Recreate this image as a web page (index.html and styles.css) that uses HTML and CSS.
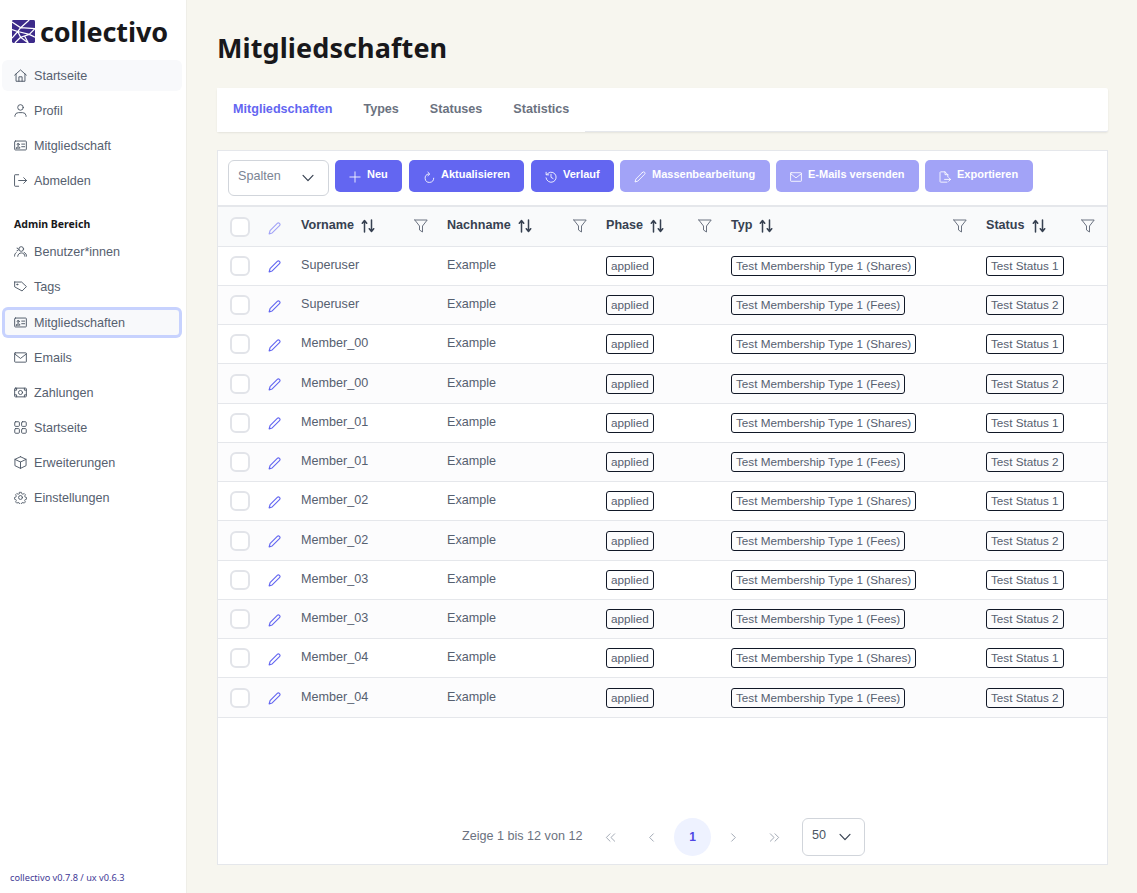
FILE: index.html
```html
<!DOCTYPE html>
<html lang="de">
<head>
    <meta charset="UTF-8">
    <meta name="viewport" content="width=device-width, initial-scale=1.0">
    <title>Mitgliedschaften</title>
    <link rel="stylesheet" href="styles.css">
</head>
<body>

<!-- Icon set -->
<svg class="icon-defs" aria-hidden="true">
    <symbol id="i-home" viewBox="0 0 14 14"><path d="M.7 6.6 7 1l6.300 5.600M2.200 5.500v7.700h9.600V5.500M5.300 13.200V8.400h3.400v4.800"/></symbol>
    <symbol id="i-user" viewBox="0 0 14 14"><circle cx="7" cy="3.700" r="3"/><path d="M1 13.300V12.500a3.800 3.800 0 0 1 3.800-3.200h4.400A3.800 3.800 0 0 1 13 12.500v.8"/></symbol>
    <symbol id="i-card" viewBox="0 0 14 14"><rect x=".7" y="2.200" width="12.600" height="9.600" rx=".8"/><circle cx="4.500" cy="5.800" r="1.100"/><path d="M2.500 9.800c.2-2 3.800-2 4 0H2.500ZM8.300 5.500h3.200M8.300 8.300h3.200"/></symbol>
    <symbol id="i-out" viewBox="0 0 14 14"><path d="M5 .8H1.200a.6.6 0 0 0-.6.6v11.200c0 .3.300.6.600.6H5M5 7h8.500M10.500 4l3 3-3 3"/></symbol>
    <symbol id="i-users" viewBox="0 0 14 14"><circle cx="7.800" cy="4.300" r="2.500"/><path d="M4 12.200c0-5 7.800-5 7.800 0M13.500 12c0-1.800-.8-3.300-2.600-4M3.300 6.300a1.500 1.500 0 1 0 0-3M.6 12c0-1.800.4-3 1.800-3.800"/></symbol>
    <symbol id="i-tag" viewBox="0 0 14 14"><path d="M.7 2.200h7.500l5.200 4.900-4.700 4.700-8-4.400V2.200Z"/><circle cx="3.500" cy="4.800" r=".6"/></symbol>
    <symbol id="i-mail" viewBox="0 0 14 14"><rect x=".7" y="2" width="12.600" height="10" rx=".6"/><path d="M.8 3.200 7 8l6.200-4.800"/></symbol>
    <symbol id="i-money" viewBox="0 0 14 14"><rect x=".7" y="2.300" width="12.600" height="9.400" rx=".8"/><circle cx="7" cy="7" r="2.200"/><path d="M.8 4.500h2V2.400M13.200 4.500h-2V2.400M.8 9.500h2v2.100M13.200 9.500h-2v2.100"/></symbol>
    <symbol id="i-grid" viewBox="0 0 14 14"><rect x=".8" y=".8" width="5" height="5" rx="1"/><rect x="8.200" y=".8" width="5" height="5" rx="1"/><rect x=".8" y="8.200" width="5" height="5" rx="1"/><rect x="8.200" y="8.200" width="5" height="5" rx="1"/></symbol>
    <symbol id="i-box" viewBox="0 0 14 14"><path d="M7 .8 13 3.600v6.800l-6 2.900-6-2.900V3.600L7 .8ZM1 3.600l6 2.900 6-2.900M7 6.500v6.800"/></symbol>
    <symbol id="i-cog" viewBox="0 0 14 14"><circle cx="7" cy="7" r="2.100"/><path d="M5.900.8h2.200l.4 1.700 1.400.6 1.500-.9 1.500 1.500-.9 1.500.6 1.400 1.700.4v2l-1.700.4-.6 1.400.9 1.500-1.500 1.500-1.500-.9-1.400.6-.4 1.700H5.900l-.4-1.700-1.400-.6-1.500.9-1.500-1.500.9-1.500-.6-1.400-1.700-.4v-2l1.700-.4.600-1.400-.9-1.500 1.500-1.500 1.500.9 1.400-.6Z" transform="translate(.7 .7) scale(.9)"/></symbol>
    <symbol id="i-chev" viewBox="0 0 14 14"><path d="m1.200 4 5.800 6 5.800-6"/></symbol>
    <symbol id="i-plus" viewBox="0 0 14 14"><path d="M7 1v12M1 7h12"/></symbol>
    <symbol id="i-refresh" viewBox="0 0 14 14"><path d="M12 7.600A5 5 0 1 1 6 2.600M5.200 .6l2.300 2.200-2.300 1.900" transform="translate(.5 .8)"/></symbol>
    <symbol id="i-history" viewBox="0 0 14 14"><path d="M2 4.200A5.900 5.900 0 1 1 1.200 8M1.300 1.500v3h3M7 3.800V7.400l2.400 1.400"/></symbol>
    <symbol id="i-pencil" viewBox="0 0 14 14"><path d="M10 1.500a1.600 1.600 0 0 1 2.400 2.300L4.500 11.800l-3.300 1 1-3.400L10 1.500Z"/></symbol>
    <symbol id="i-export" viewBox="0 0 14 14"><path d="M9.300 13H2a.8.8 0 0 1-.8-.8V1.700c0-.4.4-.7.800-.7h5l3.300 3.300v2.400M7 1v3.300h3.300M6.500 9.800h7M11.300 7.700l2.200 2.100-2.200 2.100"/></symbol>
    <symbol id="i-sort" viewBox="0 0 14 14"><path d="M3.500 13V1.800M1.300 4.300l2.200-2.800 2.200 2.800M10.500 1v11.200M8.300 9.700l2.200 2.800 2.200-2.800"/></symbol>
    <symbol id="i-filter" viewBox="0 0 14 14"><path d="M.8 1h12.400L8.500 7v6l-3-2V7L.8 1Z"/></symbol>
    <symbol id="i-first" viewBox="0 0 14 14"><path d="M6.500 3 2.500 7l4 4M11.500 3l-4 4 4 4"/></symbol>
    <symbol id="i-prev" viewBox="0 0 14 14"><path d="M9 3 5 7l4 4"/></symbol>
    <symbol id="i-next" viewBox="0 0 14 14"><path d="m5 3 4 4-4 4"/></symbol>
    <symbol id="i-last" viewBox="0 0 14 14"><path d="m2.500 3 4 4-4 4M7.500 3l4 4-4 4"/></symbol>
</svg>

<div class="layout">

    <!-- Sidebar -->
    <aside class="sidebar">
        <div class="logo">
            <svg class="logo-mark" viewBox="0 0 24 24">
                <rect width="24" height="24" rx="1.500" fill="#3c2a8a"/>
                <path class="logo-lines" d="M0 2 9 8 6 12 0 10M9 8 18 0M9 8 24 9M6 12l12 3 6-6M18 15l6 3M6 12 0 19M6 12l3 6 9-3M9 18l-6 6M9 18l8 6M13 16.500 17 24"/>
            </svg>
            <span class="logo-text">collectivo</span>
        </div>

        <nav class="nav">
            <a class="nav-item hover"><svg class="icon"><use href="#i-home"/></svg>Startseite</a>
            <a class="nav-item"><svg class="icon"><use href="#i-user"/></svg>Profil</a>
            <a class="nav-item"><svg class="icon"><use href="#i-card"/></svg>Mitgliedschaft</a>
            <a class="nav-item"><svg class="icon"><use href="#i-out"/></svg>Abmelden</a>
        </nav>

        <div class="nav-title">Admin Bereich</div>

        <nav class="nav">
            <a class="nav-item"><svg class="icon"><use href="#i-users"/></svg>Benutzer*innen</a>
            <a class="nav-item"><svg class="icon"><use href="#i-tag"/></svg>Tags</a>
            <a class="nav-item active"><svg class="icon"><use href="#i-card"/></svg>Mitgliedschaften</a>
            <a class="nav-item"><svg class="icon"><use href="#i-mail"/></svg>Emails</a>
            <a class="nav-item"><svg class="icon"><use href="#i-money"/></svg>Zahlungen</a>
            <a class="nav-item"><svg class="icon"><use href="#i-grid"/></svg>Startseite</a>
            <a class="nav-item"><svg class="icon"><use href="#i-box"/></svg>Erweiterungen</a>
            <a class="nav-item"><svg class="icon"><use href="#i-cog"/></svg>Einstellungen</a>
        </nav>

        <div class="version">collectivo v0.7.8 / ux v0.6.3</div>
    </aside>

    <!-- Main content -->
    <main class="main">
        <h1 class="page-title">Mitgliedschaften</h1>

        <div class="tabs">
            <div class="tab-list">
                <a class="tab active">Mitgliedschaften</a>
                <a class="tab">Types</a>
                <a class="tab">Statuses</a>
                <a class="tab">Statistics</a>
            </div>
        </div>

        <section class="card">
            <div class="toolbar">
                <div class="select columns"><span>Spalten</span><svg class="icon"><use href="#i-chev"/></svg></div>
                <button class="btn w-neu"><svg class="icon"><use href="#i-plus"/></svg><span>Neu</span></button>
                <button class="btn w-akt"><svg class="icon"><use href="#i-refresh"/></svg><span>Aktualisieren</span></button>
                <button class="btn w-ver"><svg class="icon"><use href="#i-history"/></svg><span>Verlauf</span></button>
                <button class="btn off w-mas"><svg class="icon"><use href="#i-pencil"/></svg><span>Massenbearbeitung</span></button>
                <button class="btn off w-mai"><svg class="icon"><use href="#i-mail"/></svg><span>E-Mails versenden</span></button>
                <button class="btn off w-exp"><svg class="icon"><use href="#i-export"/></svg><span>Exportieren</span></button>
            </div>

            <table class="table">
                <colgroup>
                    <col class="c-check"><col class="c-edit"><col class="c-first"><col class="c-last"><col class="c-phase"><col class="c-type"><col class="c-status">
                </colgroup>
                <thead>
                    <tr>
                        <th><span class="check"></span></th>
                        <th><svg class="icon pen faded"><use href="#i-pencil"/></svg></th>
                        <th><div class="th"><b>Vorname</b><svg class="icon sort"><use href="#i-sort"/></svg><svg class="icon filter"><use href="#i-filter"/></svg></div></th>
                        <th><div class="th"><b>Nachname</b><svg class="icon sort"><use href="#i-sort"/></svg><svg class="icon filter"><use href="#i-filter"/></svg></div></th>
                        <th><div class="th"><b>Phase</b><svg class="icon sort"><use href="#i-sort"/></svg><svg class="icon filter"><use href="#i-filter"/></svg></div></th>
                        <th><div class="th"><b>Typ</b><svg class="icon sort"><use href="#i-sort"/></svg><svg class="icon filter"><use href="#i-filter"/></svg></div></th>
                        <th><div class="th"><b>Status</b><svg class="icon sort"><use href="#i-sort"/></svg><svg class="icon filter"><use href="#i-filter"/></svg></div></th>
                    </tr>
                </thead>
                <tbody>
                    <tr><td><span class="check"></span></td><td><svg class="icon pen"><use href="#i-pencil"/></svg></td><td>Superuser</td><td>Example</td><td><span class="tag">applied</span></td><td><span class="tag">Test Membership Type 1 (Shares)</span></td><td><span class="tag">Test Status 1</span></td></tr>
                    <tr><td><span class="check"></span></td><td><svg class="icon pen"><use href="#i-pencil"/></svg></td><td>Superuser</td><td>Example</td><td><span class="tag">applied</span></td><td><span class="tag">Test Membership Type 1 (Fees)</span></td><td><span class="tag">Test Status 2</span></td></tr>
                    <tr><td><span class="check"></span></td><td><svg class="icon pen"><use href="#i-pencil"/></svg></td><td>Member_00</td><td>Example</td><td><span class="tag">applied</span></td><td><span class="tag">Test Membership Type 1 (Shares)</span></td><td><span class="tag">Test Status 1</span></td></tr>
                    <tr><td><span class="check"></span></td><td><svg class="icon pen"><use href="#i-pencil"/></svg></td><td>Member_00</td><td>Example</td><td><span class="tag">applied</span></td><td><span class="tag">Test Membership Type 1 (Fees)</span></td><td><span class="tag">Test Status 2</span></td></tr>
                    <tr><td><span class="check"></span></td><td><svg class="icon pen"><use href="#i-pencil"/></svg></td><td>Member_01</td><td>Example</td><td><span class="tag">applied</span></td><td><span class="tag">Test Membership Type 1 (Shares)</span></td><td><span class="tag">Test Status 1</span></td></tr>
                    <tr><td><span class="check"></span></td><td><svg class="icon pen"><use href="#i-pencil"/></svg></td><td>Member_01</td><td>Example</td><td><span class="tag">applied</span></td><td><span class="tag">Test Membership Type 1 (Fees)</span></td><td><span class="tag">Test Status 2</span></td></tr>
                    <tr><td><span class="check"></span></td><td><svg class="icon pen"><use href="#i-pencil"/></svg></td><td>Member_02</td><td>Example</td><td><span class="tag">applied</span></td><td><span class="tag">Test Membership Type 1 (Shares)</span></td><td><span class="tag">Test Status 1</span></td></tr>
                    <tr><td><span class="check"></span></td><td><svg class="icon pen"><use href="#i-pencil"/></svg></td><td>Member_02</td><td>Example</td><td><span class="tag">applied</span></td><td><span class="tag">Test Membership Type 1 (Fees)</span></td><td><span class="tag">Test Status 2</span></td></tr>
                    <tr><td><span class="check"></span></td><td><svg class="icon pen"><use href="#i-pencil"/></svg></td><td>Member_03</td><td>Example</td><td><span class="tag">applied</span></td><td><span class="tag">Test Membership Type 1 (Shares)</span></td><td><span class="tag">Test Status 1</span></td></tr>
                    <tr><td><span class="check"></span></td><td><svg class="icon pen"><use href="#i-pencil"/></svg></td><td>Member_03</td><td>Example</td><td><span class="tag">applied</span></td><td><span class="tag">Test Membership Type 1 (Fees)</span></td><td><span class="tag">Test Status 2</span></td></tr>
                    <tr><td><span class="check"></span></td><td><svg class="icon pen"><use href="#i-pencil"/></svg></td><td>Member_04</td><td>Example</td><td><span class="tag">applied</span></td><td><span class="tag">Test Membership Type 1 (Shares)</span></td><td><span class="tag">Test Status 1</span></td></tr>
                    <tr><td><span class="check"></span></td><td><svg class="icon pen"><use href="#i-pencil"/></svg></td><td>Member_04</td><td>Example</td><td><span class="tag">applied</span></td><td><span class="tag">Test Membership Type 1 (Fees)</span></td><td><span class="tag">Test Status 2</span></td></tr>
                </tbody>
            </table>

            <div class="pager">
                <span class="pager-text">Zeige 1 bis 12 von 12</span>
                <a class="page-btn"><svg class="icon"><use href="#i-first"/></svg></a>
                <a class="page-btn"><svg class="icon"><use href="#i-prev"/></svg></a>
                <a class="page-btn current">1</a>
                <a class="page-btn"><svg class="icon"><use href="#i-next"/></svg></a>
                <a class="page-btn"><svg class="icon"><use href="#i-last"/></svg></a>
                <div class="select per-page"><span>50</span><svg class="icon"><use href="#i-chev"/></svg></div>
            </div>
        </section>
    </main>
</div>

</body>
</html>
```

FILE: styles.css
```css
* {
    box-sizing: border-box;
}

body {
    margin: 0;
    font-family: "Liberation Sans", Arial, sans-serif;
    font-size: 12.600px;
    color: #566070;
    background-color: #f7f6ef;
}

.icon-defs {
    display: none;
}

.icon {
    width: 13px;
    height: 13px;
    flex: none;
    fill: none;
    stroke: currentColor;
    stroke-width: 1;
    stroke-linecap: round;
    stroke-linejoin: round;
}

.layout {
    display: flex;
    height: 893px;
    overflow: hidden;
}

/* Sidebar */
.sidebar {
    width: 187px;
    flex: none;
    display: flex;
    flex-direction: column;
    background-color: #fff;
    border-right: 1px solid #efeee8;
    padding: 19px 4px 0 2px;
}

.logo {
    display: flex;
    align-items: center;
    gap: 6px;
    height: 24px;
    margin-bottom: 17px;
    padding-left: 10px;
}

.logo-mark {
    width: 23px;
    height: 23px;
    flex: none;
}

.logo-lines {
    fill: none;
    stroke: #fff;
    stroke-width: 1.300;
}

.logo-text {
    font-family: "Noto Sans", sans-serif;
    font-size: 27px;
    font-weight: 700;
    color: #18181b;
    letter-spacing: -0.1px;
    position: relative;
    left: -1px;
}

.nav {
    display: flex;
    flex-direction: column;
    gap: 4px;
}

.nav-item {
    display: flex;
    align-items: center;
    gap: 7px;
    height: 31px;
    padding-left: 12px;
    border-radius: 6px;
    color: #56606f;
}

.nav-item .icon {
    color: #4b5563;
}

.nav-item.hover {
    background-color: #f8f9fb;
}

.nav-item.active {
    margin-top: 1px;
    background-color: #f8f9fb;
    box-shadow: inset 0 0 0 3px #c7d2fe;
}

.nav-title {
    margin: 18px 0 2px 12px;
    height: 20px;
    line-height: 20px;
    font-family: "Noto Sans", sans-serif;
    font-size: 10.500px;
    font-weight: 700;
    color: #18181b;
}

.version {
    margin-top: auto;
    margin-bottom: 9px;
    padding-left: 8px;
    font-family: "Noto Sans", sans-serif;
    font-size: 9.200px;
    color: #3f3a96;
}

/* Main */
.main {
    flex: 1;
    min-width: 0;
    display: flex;
    flex-direction: column;
    padding: 0 29px 28px 30px;
}

.page-title {
    margin: 29px 0 21px;
    height: 38px;
    line-height: 38px;
    font-family: "Noto Sans", sans-serif;
    font-size: 27px;
    font-weight: 700;
    letter-spacing: 0.1px;
    color: #18181b;
}

.tabs {
    height: 44px;
    flex: none;
    background-color: #fff;
    border-bottom: 1px solid #e5e7eb;
    border-radius: 2px;
    box-shadow: 0 1px 2px rgba(0, 0, 0, 0.08);
    margin-bottom: 18px;
}

.tab-list {
    display: flex;
    width: 368px;
    height: 44px;
    background-color: #fff;
}

.tab {
    padding: 14px 15px 0 16px;
    font-weight: 700;
    color: #6b7280;
}

.tab.active {
    color: #6366f1;
}

.card {
    flex: 1;
    display: flex;
    flex-direction: column;
    background-color: #fff;
    border: 1px solid #e5e7eb;
}

.toolbar {
    display: flex;
    align-items: flex-start;
    gap: 7px;
    height: 56px;
    flex: none;
    padding: 9px 0 0 10px;
    border-bottom: 2px solid #e5e7eb;
}

.select {
    display: flex;
    align-items: center;
    justify-content: space-between;
    height: 36px;
    border: 1px solid #d1d5db;
    border-radius: 6px;
    background-color: #fff;
}

.select span {
    position: relative;
    top: -2px;
}

.select .icon {
    width: 12px;
    height: 12px;
    color: #374151;
    stroke-width: 1.400;
}

.columns {
    width: 101px;
    padding: 0 14px 0 9px;
    color: #7b8494;
    margin-right: -1px;
}

.btn {
    display: flex;
    align-items: center;
    gap: 6px;
    height: 32px;
    padding: 2px 0 0 14px;
    border: none;
    border-radius: 5px;
    background-color: #6366f1;
    color: #fff;
    font-family: inherit;
    font-size: 11px;
    font-weight: 700;
}

.btn span {
    position: relative;
    top: -3px;
}

.btn .icon {
    width: 12px;
    height: 12px;
}

.btn.off {
    background-color: #a2a3f7;
    margin-left: -1px;
}

.w-neu { width: 67px; }
.w-akt { width: 115px; }
.w-ver { width: 83px; }
.w-mas { width: 150px; }
.w-mai { width: 143px; }
.w-exp { width: 108px; }

/* Table */
.table {
    width: 100%;
    table-layout: fixed;
    border-collapse: collapse;
}

.c-check { width: 38px; }
.c-edit { width: 33px; }
.c-first { width: 146px; }
.c-last { width: 159px; }
.c-phase { width: 125px; }
.c-type { width: 255px; }

.table th,
.table td {
    padding: 0 0 0 12px;
    text-align: left;
    vertical-align: middle;
    border-bottom: 1px solid #e5e7eb;
}

.table th {
    height: 39.200px;
    background-color: #f9fafb;
    padding-right: 7px;
    font-weight: 400;
}

.table td {
    height: 39.250px;
    padding-bottom: 2px;
}

.table tbody tr:nth-child(even) {
    background-color: #fcfcfd;
}

.th {
    display: flex;
    align-items: center;
    color: #374151;
}

.th b {
    font-weight: 700;
    position: relative;
    top: -1px;
}

.sort {
    margin-left: 7px;
    width: 14px;
    height: 14px;
    color: #374151;
    stroke-width: 1.500;
}

.filter {
    margin-left: auto;
    width: 14px;
    height: 14px;
    color: #6b7280;
}

.table th:last-child {
    padding-right: 12px;
}

.check {
    display: block;
    width: 20px;
    height: 20px;
    border: 2px solid #e2e4e9;
    border-radius: 6px;
    background-color: #fff;
    position: relative;
    top: 1px;
}

.pen {
    display: block;
    color: #6366f1;
    stroke-width: 1.200;
    position: relative;
    top: 2px;
}

.pen.faded {
    color: #a2a3f7;
}

.tag {
    display: inline-block;
    height: 20px;
    line-height: 17px;
    padding: 0 4px;
    border: 1px solid #111827;
    border-radius: 3px;
    font-size: 11.700px;
    vertical-align: middle;
    position: relative;
    top: 1px;
}

/* Pagination */
.pager {
    margin-top: auto;
    height: 57px;
    display: flex;
    align-items: flex-start;
    padding: 11px 0 0 244px;
    flex: none;
}

.pager-text {
    line-height: 36px;
    width: 130px;
    color: #6b7280;
}

.page-btn {
    width: 37px;
    height: 38px;
    margin-right: 4px;
    display: flex;
    align-items: center;
    justify-content: center;
    border-radius: 50%;
    color: #9ca3af;
}

.page-btn.current {
    background-color: #eef2ff;
    color: #4f46e5;
    font-size: 12px;
    font-weight: 700;
}

.per-page {
    width: 63px;
    height: 38px;
    margin-left: 5px;
    padding: 0 13px 0 9px;
    color: #4b5563;
}
```
